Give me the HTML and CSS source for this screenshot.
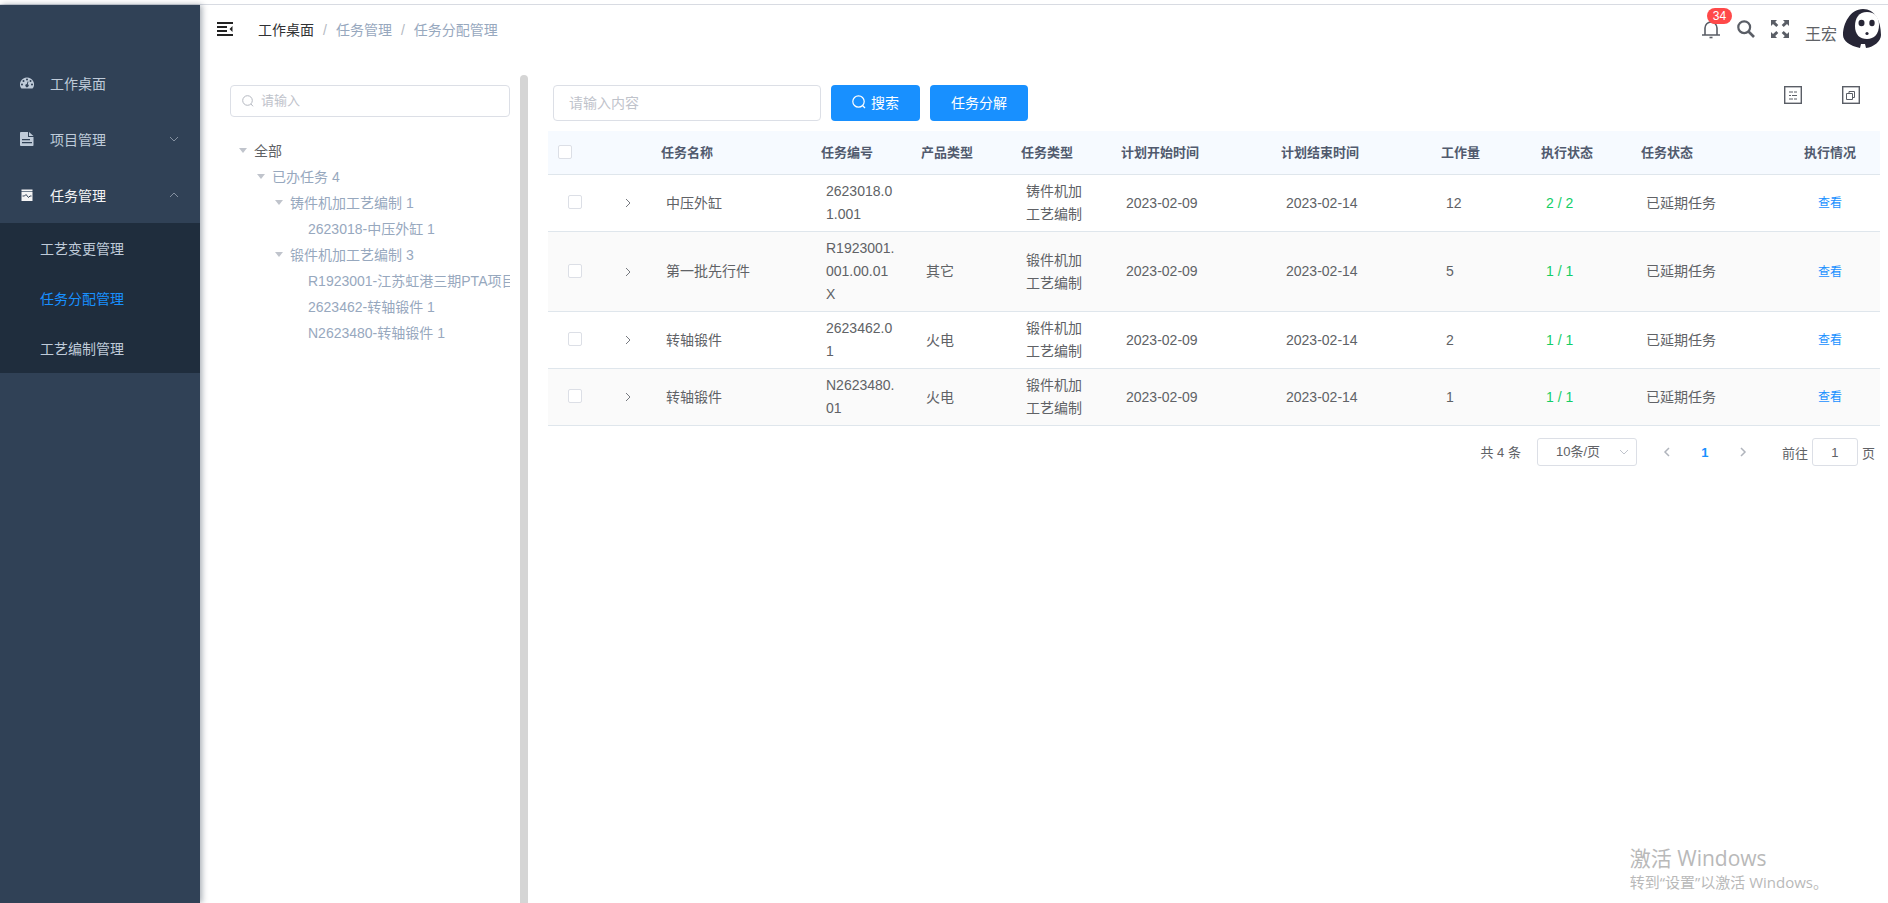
FILE: index.html
```html
<!DOCTYPE html>
<html lang="zh-CN">
<head>
<meta charset="utf-8">
<title>任务分配管理</title>
<link rel="stylesheet" href="styles.css">
</head>
<body>
<div class="shell">
  <nav class="sidebar">
    <a class="menu-item" href="#">
      <svg class="menu-icon" viewBox="0 0 14 14"><path fill="currentColor" fill-rule="evenodd" d="M7 1.500a7 7 0 0 0-6 10.600q.2.400.6.400h10.800q.4 0 .6-.4A7 7 0 0 0 7 1.500zM7 2.500a1 1 0 1 1 0 2a1 1 0 1 1 0-2zM3.500 4a1 1 0 1 1 0 2a1 1 0 1 1 0-2zM2 7.500a1 1 0 1 1 0 2a1 1 0 1 1 0-2zM12 7.500a1 1 0 1 1 0 2a1 1 0 1 1 0-2zM10.500 4a1 1 0 1 1 0 2a1 1 0 1 1 0-2zM7.600 5.400l.9.200-.7 2.700a1.600 1.600 0 1 1-1-.2z"/></svg>
      <span>工作桌面</span>
    </a>
    <a class="menu-item" href="#">
      <svg class="menu-icon" viewBox="0 0 14 14"><path fill="currentColor" fill-rule="evenodd" d="M1 0h7v4.500q0 .5.500.5H13.500v8.200q0 .8-.8.800H1q-1 0-1-.8V.8Q0 0 1 0zM2 7v1.200h8V7zM2 10v1.200h10v-1.200z"/><path fill="currentColor" d="M9 0l4.500 4H9z"/></svg>
      <span>项目管理</span>
      <svg class="menu-arrow" viewBox="0 0 12 12"><path d="M2 4l4 4 4-4"/></svg>
    </a>
    <a class="menu-item menu-item-open" href="#">
      <svg class="menu-icon" viewBox="0 0 14 14"><path fill="currentColor" d="M1.500 1.500h11v1.500h-11zM1.500 4h11v9h-11z"/><path fill="none" stroke="#304156" stroke-width="1" d="M2.500 8h2l1.500-1.500 2.500 3L10 8h1.500"/><path fill="none" stroke="#8490a0" stroke-width=".8" d="M1.500 3.500h11"/></svg>
      <span>任务管理</span>
      <svg class="menu-arrow" viewBox="0 0 12 12"><path d="M2 8l4-4 4 4"/></svg>
    </a>
    <div class="submenu">
      <a href="#">工艺变更管理</a>
      <a class="current" href="#">任务分配管理</a>
      <a href="#">工艺编制管理</a>
    </div>
  </nav>

  <div class="page">
    <header class="topbar">
      <button class="icon-button" aria-label="收起菜单">
        <svg width="16" height="16" viewBox="0 0 16 16"><path fill="#222" d="M0 1h16v2H0zM0 5h10v2H0zM0 9h10v2H0zM0 13h16v2H0zM15.500 5v6l-3-3z"/></svg>
      </button>
      <div class="breadcrumb">
        <a class="breadcrumb-home" href="#">工作桌面</a><span class="slash">/</span><span>任务管理</span><span class="slash">/</span><span>任务分配管理</span>
      </div>
      <div class="tools">
        <button class="icon-button bell" aria-label="通知">
          <svg width="20" height="20" viewBox="0 0 20 20" fill="none" stroke="#5a5e66" stroke-width="1.600"><path d="M1 16h18M4 16V9a6 6 0 0 1 12 0v7M10 1v2"/><path d="M8.500 18.500h3"/></svg>
          <span class="badge">34</span>
        </button>
        <button class="icon-button" aria-label="搜索">
          <svg width="18" height="18" viewBox="0 0 18 18" fill="none" stroke="#5a5e66"><circle cx="7.200" cy="7.200" r="5.900" stroke-width="2.200"/><path stroke-width="2.600" d="M11.500 11.500l5.500 5.500"/></svg>
        </button>
        <button class="icon-button" aria-label="全屏">
          <svg width="18" height="18" viewBox="0 0 18 18" fill="#5a5e66"><path d="M0 0h6L4.200 1.900 7.300 5 5.300 7 2 4.100 0 6z"/><path d="M18 0h-6l1.800 1.900L10.700 5l2 2L16 4.100 18 6z"/><path d="M0 18h6l-1.800-1.900L7.300 13l-2-2L2 13.900 0 12z"/><path d="M18 18h-6l1.800-1.900-3.100-3.100 2-2 3.300 2.900L18 12z"/></svg>
        </button>
        <div class="user">
          <span class="user-name">王宏</span>
          <svg width="38" height="40" viewBox="0 0 38 40"><path fill="#272636" d="M20 0C7 0 0 15 0 26c0 6 7 11 17 13l1-4h4l1 4c8-1 15-7 15-13C38 12 32 0 20 0z"/><path fill="#fff" d="M24 3c-8 0-12 6-12 14 0 9 5 13 12 13s12-5 12-14c0-8-4-13-12-13z"/><ellipse cx="18.500" cy="14" rx="3" ry="3.200" fill="#272636"/><ellipse cx="29" cy="14" rx="2.700" ry="3.200" fill="#272636"/><circle cx="24" cy="24.500" r="1.600" fill="#272636"/></svg>
        </div>
      </div>
    </header>

    <div class="workspace">
      <aside class="tree-panel">
        <label class="tree-search">
          <svg width="12" height="12" viewBox="0 0 12 12" fill="none" stroke="#b4b8c0"><circle cx="5.500" cy="5.500" r="4.800"/><path d="M9 9l2 2.300"/></svg>
          <input type="text" placeholder="请输入" aria-label="请输入">
        </label>
        <ul class="tree">
          <li><div class="node"><i class="caret"></i><span class="node-root">全部</span></div>
            <ul>
              <li><div class="node"><i class="caret"></i><span>已办任务 4</span></div>
                <ul>
                  <li><div class="node"><i class="caret"></i><span>铸件机加工艺编制 1</span></div>
                    <ul><li><div class="node leaf">2623018-中压外缸 1</div></li></ul>
                  </li>
                  <li><div class="node"><i class="caret"></i><span>锻件机加工艺编制 3</span></div>
                    <ul>
                      <li><div class="node leaf">R1923001-江苏虹港三期PTA项目</div></li>
                      <li><div class="node leaf">2623462-转轴锻件 1</div></li>
                      <li><div class="node leaf">N2623480-转轴锻件 1</div></li>
                    </ul>
                  </li>
                </ul>
              </li>
            </ul>
          </li>
        </ul>
      </aside>
      <div class="splitter"></div>

      <main class="content">
        <div class="toolbar">
          <input class="search-input" type="text" placeholder="请输入内容" aria-label="请输入内容">
          <button class="primary">
            <svg width="14" height="14" viewBox="0 0 14 14" fill="none" stroke="#fff" stroke-width="1.200"><circle cx="6.500" cy="6.500" r="5.700"/><path d="M10.500 10.500l2.500 2.500"/></svg>
            搜索
          </button>
          <button class="primary">任务分解</button>
          <div class="table-tools">
            <button class="icon-button" aria-label="列设置">
              <svg width="18" height="18" viewBox="0 0 18 18" fill="none" stroke="#5a5e66"><rect x=".7" y=".7" width="16.600" height="16.600" stroke-width="1.400"/><path d="M5 6h4M10 6h3M5 9.500h2M8 9.500h5M5 13h4M10 13h3"/></svg>
            </button>
            <button class="icon-button" aria-label="窗口">
              <svg width="18" height="18" viewBox="0 0 18 18" fill="none" stroke="#5a5e66"><rect x=".7" y=".7" width="16.600" height="16.600" stroke-width="1.400"/><path d="M4.500 7.500h6v6h-6zM7 7.500v-2h5.500v6h-2"/></svg>
            </button>
          </div>
        </div>

        <table class="tasks">
          <colgroup>
            <col class="col-check"><col class="col-expand"><col class="col-wide"><col class="col-narrow"><col class="col-narrow"><col class="col-narrow"><col class="col-wide"><col class="col-wide"><col class="col-narrow"><col class="col-narrow"><col><col class="col-narrow">
          </colgroup>
          <thead>
            <tr><th><input type="checkbox" aria-label="全选"></th><th></th><th>任务名称</th><th>任务编号</th><th>产品类型</th><th>任务类型</th><th>计划开始时间</th><th>计划结束时间</th><th>工作量</th><th>执行状态</th><th>任务状态</th><th class="center">执行情况</th></tr>
          </thead>
          <tbody>
            <tr><td class="check"><input type="checkbox" aria-label="选择中压外缸"></td><td class="expand"><button class="icon-button" aria-label="展开"><svg width="12" height="12" viewBox="0 0 12 12"><path d="M4 2l4 4-4 4"/></svg></button></td><td>中压外缸</td><td>2623018.01.001</td><td></td><td>铸件机加工艺编制</td><td>2023-02-09</td><td>2023-02-14</td><td>12</td><td class="done">2 / 2</td><td>已延期任务</td><td class="center"><a href="#">查看</a></td></tr>
            <tr><td class="check"><input type="checkbox" aria-label="选择第一批先行件"></td><td class="expand"><button class="icon-button" aria-label="展开"><svg width="12" height="12" viewBox="0 0 12 12"><path d="M4 2l4 4-4 4"/></svg></button></td><td>第一批先行件</td><td>R1923001.001.00.01X</td><td>其它</td><td>锻件机加工艺编制</td><td>2023-02-09</td><td>2023-02-14</td><td>5</td><td class="done">1 / 1</td><td>已延期任务</td><td class="center"><a href="#">查看</a></td></tr>
            <tr><td class="check"><input type="checkbox" aria-label="选择转轴锻件 2623462.01"></td><td class="expand"><button class="icon-button" aria-label="展开"><svg width="12" height="12" viewBox="0 0 12 12"><path d="M4 2l4 4-4 4"/></svg></button></td><td>转轴锻件</td><td>2623462.01</td><td>火电</td><td>锻件机加工艺编制</td><td>2023-02-09</td><td>2023-02-14</td><td>2</td><td class="done">1 / 1</td><td>已延期任务</td><td class="center"><a href="#">查看</a></td></tr>
            <tr><td class="check"><input type="checkbox" aria-label="选择转轴锻件 N2623480.01"></td><td class="expand"><button class="icon-button" aria-label="展开"><svg width="12" height="12" viewBox="0 0 12 12"><path d="M4 2l4 4-4 4"/></svg></button></td><td>转轴锻件</td><td>N2623480.01</td><td>火电</td><td>锻件机加工艺编制</td><td>2023-02-09</td><td>2023-02-14</td><td>1</td><td class="done">1 / 1</td><td>已延期任务</td><td class="center"><a href="#">查看</a></td></tr>
          </tbody>
        </table>

        <div class="pagination">
          <span>共 4 条</span>
          <div class="page-size">
            <select aria-label="每页条数"><option>10条/页</option></select>
            <svg width="12" height="12" viewBox="0 0 12 12"><path d="M2 4l4 4 4-4"/></svg>
          </div>
          <div class="pager">
            <button class="icon-button" aria-label="上一页" disabled><svg width="12" height="12" viewBox="0 0 12 12"><path d="M8 2L4 6l4 4"/></svg></button>
            <button class="icon-button page-number">1</button>
            <button class="icon-button" aria-label="下一页" disabled><svg width="12" height="12" viewBox="0 0 12 12"><path d="M4 2l4 4-4 4"/></svg></button>
          </div>
          <label class="jump">前往<input type="text" value="1">页</label>
        </div>
      </main>
    </div>
  </div>
</div>
<div class="watermark">
  <div class="watermark-title">激活 Windows</div>
  <div>转到“设置”以激活 Windows。</div>
</div>
</body>
</html>
```
FILE: styles.css
```css
* {
  box-sizing: border-box;
}

body {
  margin: 0;
  min-height: 100vh;
  display: flex;
  flex-direction: column;
  padding-top: 4px;
  overflow: hidden;
  background: #fff;
  color: #606266;
  font: 14px "Liberation Sans", "Noto Sans CJK SC", sans-serif;
}

a {
  color: inherit;
  text-decoration: none;
}

input,
select,
button {
  font: inherit;
  color: inherit;
}

input::placeholder {
  color: #bfc3cb;
}

.icon-button {
  display: flex;
  align-items: center;
  justify-content: center;
  padding: 0;
  border: 0;
  background: none;
}

.shell {
  flex: 1;
  display: flex;
  border-top: 1px solid #d8dbe2;
}

/* Sidebar */
.sidebar {
  width: 200px;
  flex: none;
  padding-top: 50px;
  background: #304156;
  box-shadow: 2px 0 6px rgba(0, 21, 41, 0.35);
  color: #bfcbd9;
}

.menu-item {
  display: flex;
  align-items: center;
  height: 56px;
  padding: 0 20px;
}

.menu-item-open {
  color: #f4f4f5;
}

.menu-icon {
  width: 14px;
  height: 14px;
  margin-right: 16px;
}

.menu-arrow {
  width: 12px;
  height: 12px;
  margin-left: auto;
  fill: none;
  stroke: #8490a0;
}

.submenu {
  background: #1f2d3d;
}

.submenu a {
  display: block;
  height: 50px;
  padding-left: 40px;
  line-height: 52px;
}

.submenu .current {
  color: #1890ff;
}

/* Top bar */
.page {
  flex: 1;
  min-width: 0;
  display: flex;
  flex-direction: column;
}

.topbar {
  display: flex;
  align-items: center;
  height: 48px;
  padding: 0 7px 0 17px;
}

.breadcrumb {
  margin-left: 25px;
  color: #97a8be;
}

.breadcrumb-home {
  color: #303133;
}

.slash {
  margin: 0 9px;
  color: #b4b9c2;
}

.tools {
  display: flex;
  align-items: center;
  gap: 16px;
  margin-left: auto;
}

.bell {
  position: relative;
}

.badge {
  position: absolute;
  left: 6px;
  top: -11px;
  width: 25px;
  border-radius: 8px;
  background: #ff4949;
  color: #fff;
  font-size: 12px;
  line-height: 16px;
  text-align: center;
}

.user {
  display: flex;
  align-items: center;
  gap: 6px;
}

.user-name {
  font-size: 16px;
  padding-top: 7px;
}

/* Tree panel */
.workspace {
  flex: 1;
  display: flex;
  padding: 22px 8px 0 30px;
}

.tree-panel {
  width: 280px;
  flex: none;
  padding-top: 10px;
  overflow: hidden;
}

.tree-search {
  display: flex;
  align-items: center;
  gap: 7px;
  height: 32px;
  padding: 0 11px 1px;
  border: 1px solid #dcdfe6;
  border-radius: 4px;
}

.tree-search input {
  flex: 1;
  min-width: 0;
  padding: 0;
  border: 0;
  outline: 0;
  font-size: 13px;
}

.tree,
.tree ul {
  margin: 0;
  padding: 0;
  list-style: none;
}

.tree {
  padding-top: 20px;
  color: #97a8be;
}

.tree ul {
  padding-left: 18px;
}

.node {
  display: flex;
  align-items: center;
  height: 26px;
  padding-left: 9px;
  white-space: nowrap;
}

.node-root {
  color: #606266;
}

.caret {
  margin-right: 7px;
  border: 4px solid transparent;
  border-top: 5px solid #c0c4cc;
  border-bottom: 0;
}

.leaf {
  padding-left: 24px;
}

.splitter {
  width: 8px;
  flex: none;
  margin-left: 10px;
  border-radius: 4px 4px 0 0;
  background: #d5d5d5;
}

/* Content */
.content {
  flex: 1;
  min-width: 0;
  padding: 10px 0 0 20px;
}

.toolbar {
  display: flex;
  gap: 10px;
  padding: 0 20px 0 5px;
  margin-bottom: 10px;
}

.search-input {
  width: 268px;
  height: 36px;
  padding: 0 15px;
  border: 1px solid #dcdfe6;
  border-radius: 4px;
}

.primary {
  display: flex;
  align-items: center;
  gap: 5px;
  height: 36px;
  padding: 0 21px 2px;
  border: 0;
  border-radius: 4px;
  background: #1890ff;
  color: #fff;
}

.table-tools {
  display: flex;
  align-items: flex-start;
  gap: 40px;
  margin-left: auto;
  padding-top: 1px;
}

.tasks {
  width: 100%;
  table-layout: fixed;
  border-collapse: separate;
  border-spacing: 0;
}

.col-check {
  width: 55px;
}

.col-expand {
  width: 48px;
}

.col-narrow {
  width: 100px;
}

.col-wide {
  width: 160px;
}

.tasks th,
.tasks td {
  border-bottom: 1px solid #dfe6ec;
  text-align: left;
}

.tasks th {
  height: 44px;
  padding: 0 10px 2px;
  background: #f6faff;
  color: #515a6e;
  font-size: 13px;
}

.tasks td {
  padding: 5px 16px 5px 15px;
  line-height: 23px;
  word-break: break-all;
}

.tasks tbody tr:nth-child(even) {
  background: #fafafa;
}

.tasks td.check {
  padding: 0 20px 2px;
}

.tasks td.expand {
  padding: 0 19px;
}

.tasks .center {
  padding-left: 0;
  padding-right: 0;
  text-align: center;
}

.tasks td.done {
  color: #13ce66;
}

.tasks a {
  color: #1890ff;
  font-size: 12px;
}

.tasks input {
  display: block;
  appearance: none;
  width: 14px;
  height: 14px;
  margin: 0;
  border: 1px solid #dcdfe6;
  border-radius: 2px;
  background: #fff;
}

.expand svg {
  fill: none;
  stroke: #777a80;
}

/* Pagination */
.pagination {
  display: flex;
  align-items: center;
  justify-content: flex-end;
  padding: 12px 5px 0 0;
  font-size: 13px;
}

.pagination > span {
  padding-bottom: 2px;
}

.page-size {
  position: relative;
  margin-left: 16px;
}

.page-size select {
  appearance: none;
  width: 100px;
  height: 28px;
  padding: 0 18px 2px;
  border: 1px solid #dcdfe6;
  border-radius: 3px;
  background: #fff;
}

.page-size svg {
  position: absolute;
  right: 7px;
  top: 8px;
  pointer-events: none;
}

.pagination svg {
  fill: none;
  stroke: #c0c4cc;
}

.pager {
  display: flex;
  gap: 10px;
  margin: 0 25px 0 16px;
}

.pager button {
  width: 28px;
  height: 28px;
}

.pager svg {
  stroke: #b0b4bc;
  stroke-width: 1.5;
}

.pager .page-number {
  color: #1890ff;
  font-weight: 700;
}

.jump {
  display: flex;
  align-items: center;
  gap: 4px;
}

.jump input {
  width: 46px;
  height: 28px;
  padding: 0;
  border: 1px solid #dcdfe6;
  border-radius: 3px;
  text-align: center;
}

/* System notice above the page */
.watermark {
  position: absolute;
  right: 60px;
  bottom: 10px;
  color: #b9b9b9;
  font-family: "Open Sans", "Noto Sans CJK SC", sans-serif;
  font-size: 15px;
  line-height: 22px;
}

.watermark-title {
  font-size: 21px;
  line-height: 26px;
}
```
